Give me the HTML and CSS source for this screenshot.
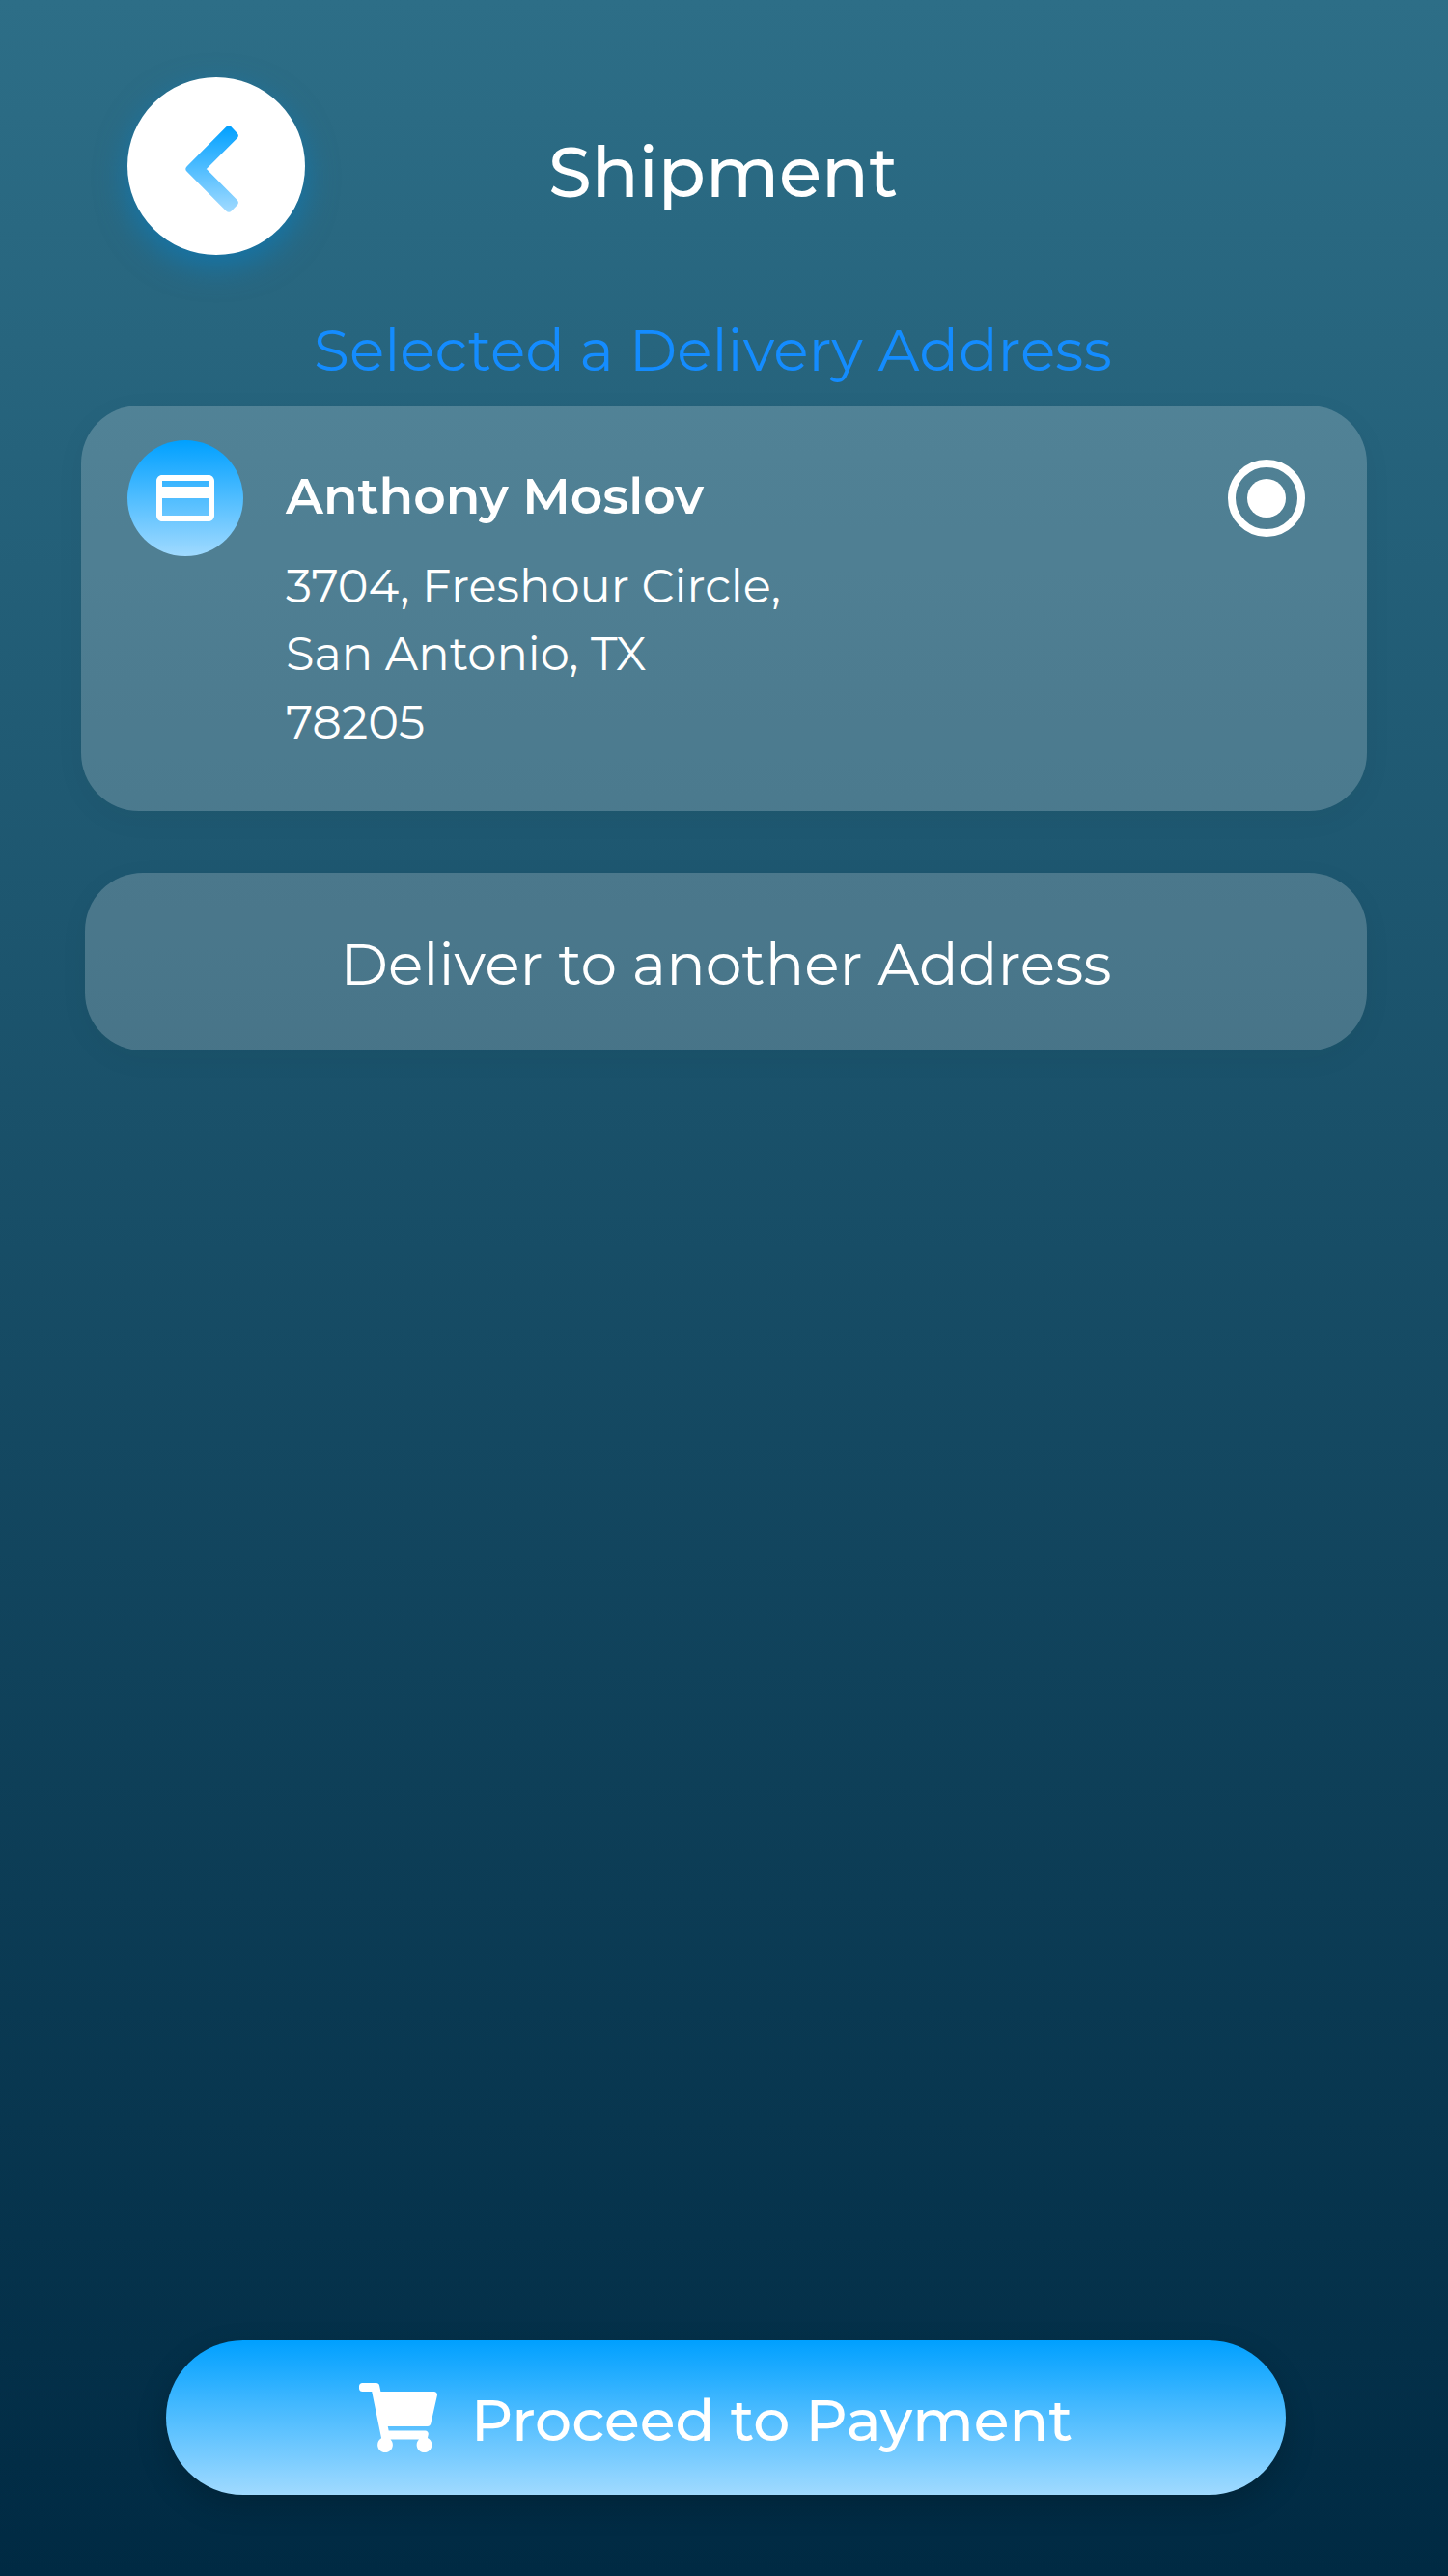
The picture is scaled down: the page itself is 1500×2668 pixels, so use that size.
FILE: index.html
```html
<!DOCTYPE html>
<html lang="en">
<head>
<meta charset="utf-8">
<title>Shipment</title>
<link rel="stylesheet" href="styles.css">
</head>
<body>
<main class="screen">
  <header class="header">
    <button class="back" aria-label="Back">
      <svg class="back-icon" viewBox="0 0 184 184">
        <defs>
          <linearGradient id="accent" gradientUnits="userSpaceOnUse" x1="0" y1="50" x2="0" y2="139">
            <stop offset="0" stop-color="#00a0ff"/>
            <stop offset="1" stop-color="#a0daff"/>
          </linearGradient>
        </defs>
        <path d="M64.5 95 L105 54.4 L110.7 60.4 L76.3 95 L110.7 129.8 L105 135.6 Z" fill="url(#accent)" stroke="url(#accent)" stroke-width="8" stroke-linejoin="round"/>
      </svg>
    </button>
    <h1 class="title">Shipment</h1>
  </header>

  <h2 class="subtitle">Selected a Delivery Address</h2>

  <section class="card">
    <div class="badge">
      <svg class="badge-icon" viewBox="0 0 24 24"><path fill="#fff" d="M20 4H4c-1.11 0-1.99.89-1.99 2L2 18c0 1.11.89 2 2 2h16c1.11 0 2-.89 2-2V6c0-1.11-.89-2-2-2zm0 14H4v-6h16v6zm0-10H4V6h16v2z"/></svg>
    </div>
    <div class="address">
      <p class="name">Anthony Moslov</p>
      <p class="line">3704, Freshour Circle,</p>
      <p class="line">San Antonio, TX</p>
      <p class="line">78205</p>
    </div>
    <svg class="radio" viewBox="0 0 80 80">
      <circle cx="40" cy="40" r="36" fill="none" stroke="#fff" stroke-width="8"/>
      <circle cx="40" cy="40" r="20" fill="#fff"/>
    </svg>
  </section>

  <button class="other">Deliver to another Address</button>

  <button class="pay">
    <svg class="cart" viewBox="0 0 576 512"><path fill="#fff" d="M528.12 301.319l47.273-208C578.806 78.301 567.391 64 551.99 64H159.208l-9.166-44.81C147.758 8.021 137.93 0 126.529 0H24C10.745 0 0 10.745 0 24v16c0 13.255 10.745 24 24 24h69.883l70.248 343.435C147.325 417.1 136 435.222 136 456c0 30.928 25.072 56 56 56s56-25.072 56-56c0-15.674-6.447-29.835-16.824-40h209.647C430.447 426.165 424 440.326 424 456c0 30.928 25.072 56 56 56s56-25.072 56-56c0-22.172-12.888-41.332-31.579-50.405l5.517-24.276c3.413-15.018-8.002-29.319-23.403-29.319H218.117l-6.545-32h293.145c11.206 0 20.92-7.754 23.403-18.681z"/></svg>
    <span class="pay-label">Proceed to Payment</span>
  </button>
</main>
</body>
</html>
```
FILE: styles.css
```css
* {
  box-sizing: border-box;
  margin: 0;
  padding: 0;
}

body {
  font-family: Montserrat, Inter, sans-serif;
  color: #fff;
}

button {
  border: 0;
  font: inherit;
  color: inherit;
}

.screen {
  display: flex;
  flex-direction: column;
  width: 1500px;
  height: 2668px;
  padding: 80px 84px 84px;
  background: linear-gradient(#2d6e87, #002a43);
}

.header {
  display: flex;
  height: 184px;
  padding-left: 48px;
}

.back {
  width: 184px;
  height: 184px;
  border-radius: 50%;
  background: #fff;
  box-shadow: 0 12px 32px rgba(0, 132, 210, 0.5);
}

.back-icon {
  display: block;
}

.title {
  margin-left: 252px;
  padding-top: 48px;
  font-size: 72px;
  font-weight: 500;
  line-height: 100px;
}

.subtitle {
  height: 156px;
  padding: 59px 0 0 241px;
  font-size: 60px;
  font-weight: 400;
  line-height: 80px;
  color: #148cff;
}

.card {
  display: flex;
  height: 420px;
  padding: 36px 64px 0 48px;
  border-radius: 60px;
  background: rgba(255, 255, 255, 0.2);
  box-shadow: 0 8px 32px rgba(0, 50, 20, 0.045);
}

.badge {
  display: grid;
  place-items: center;
  width: 120px;
  height: 120px;
  border-radius: 50%;
  background: linear-gradient(#00a0ff, #a0daff);
}

.badge-icon {
  width: 72px;
  height: 72px;
}

.address {
  flex: 1;
  padding: 23px 0 0 44px;
}

.name {
  height: 92.5px;
  font-size: 52px;
  font-weight: 600;
  line-height: 70px;
}

.line {
  height: 70.5px;
  font-size: 48px;
  line-height: 70px;
}

.radio {
  width: 80px;
  height: 80px;
  margin-top: 20px;
}

.other {
  height: 184px;
  margin: 64px 0 0 4px;
  padding: 5px 0 0 264.5px;
  border-radius: 60px;
  background: rgba(255, 255, 255, 0.2);
  box-shadow: 0 8px 32px rgba(0, 50, 20, 0.045);
  font-size: 60px;
  text-align: left;
}

.pay {
  display: flex;
  align-items: center;
  height: 160px;
  margin: auto 84px 0 88px;
  padding-left: 200px;
  border-radius: 80px;
  background: linear-gradient(#00a0ff, #a0daff);
  box-shadow: 0 12px 32px rgba(0, 0, 0, 0.18);
  font-size: 60px;
  font-weight: 500;
}

.cart {
  width: 81px;
  height: 72px;
  margin-right: 35px;
}

.pay-label {
  padding-top: 5px;
}
```
